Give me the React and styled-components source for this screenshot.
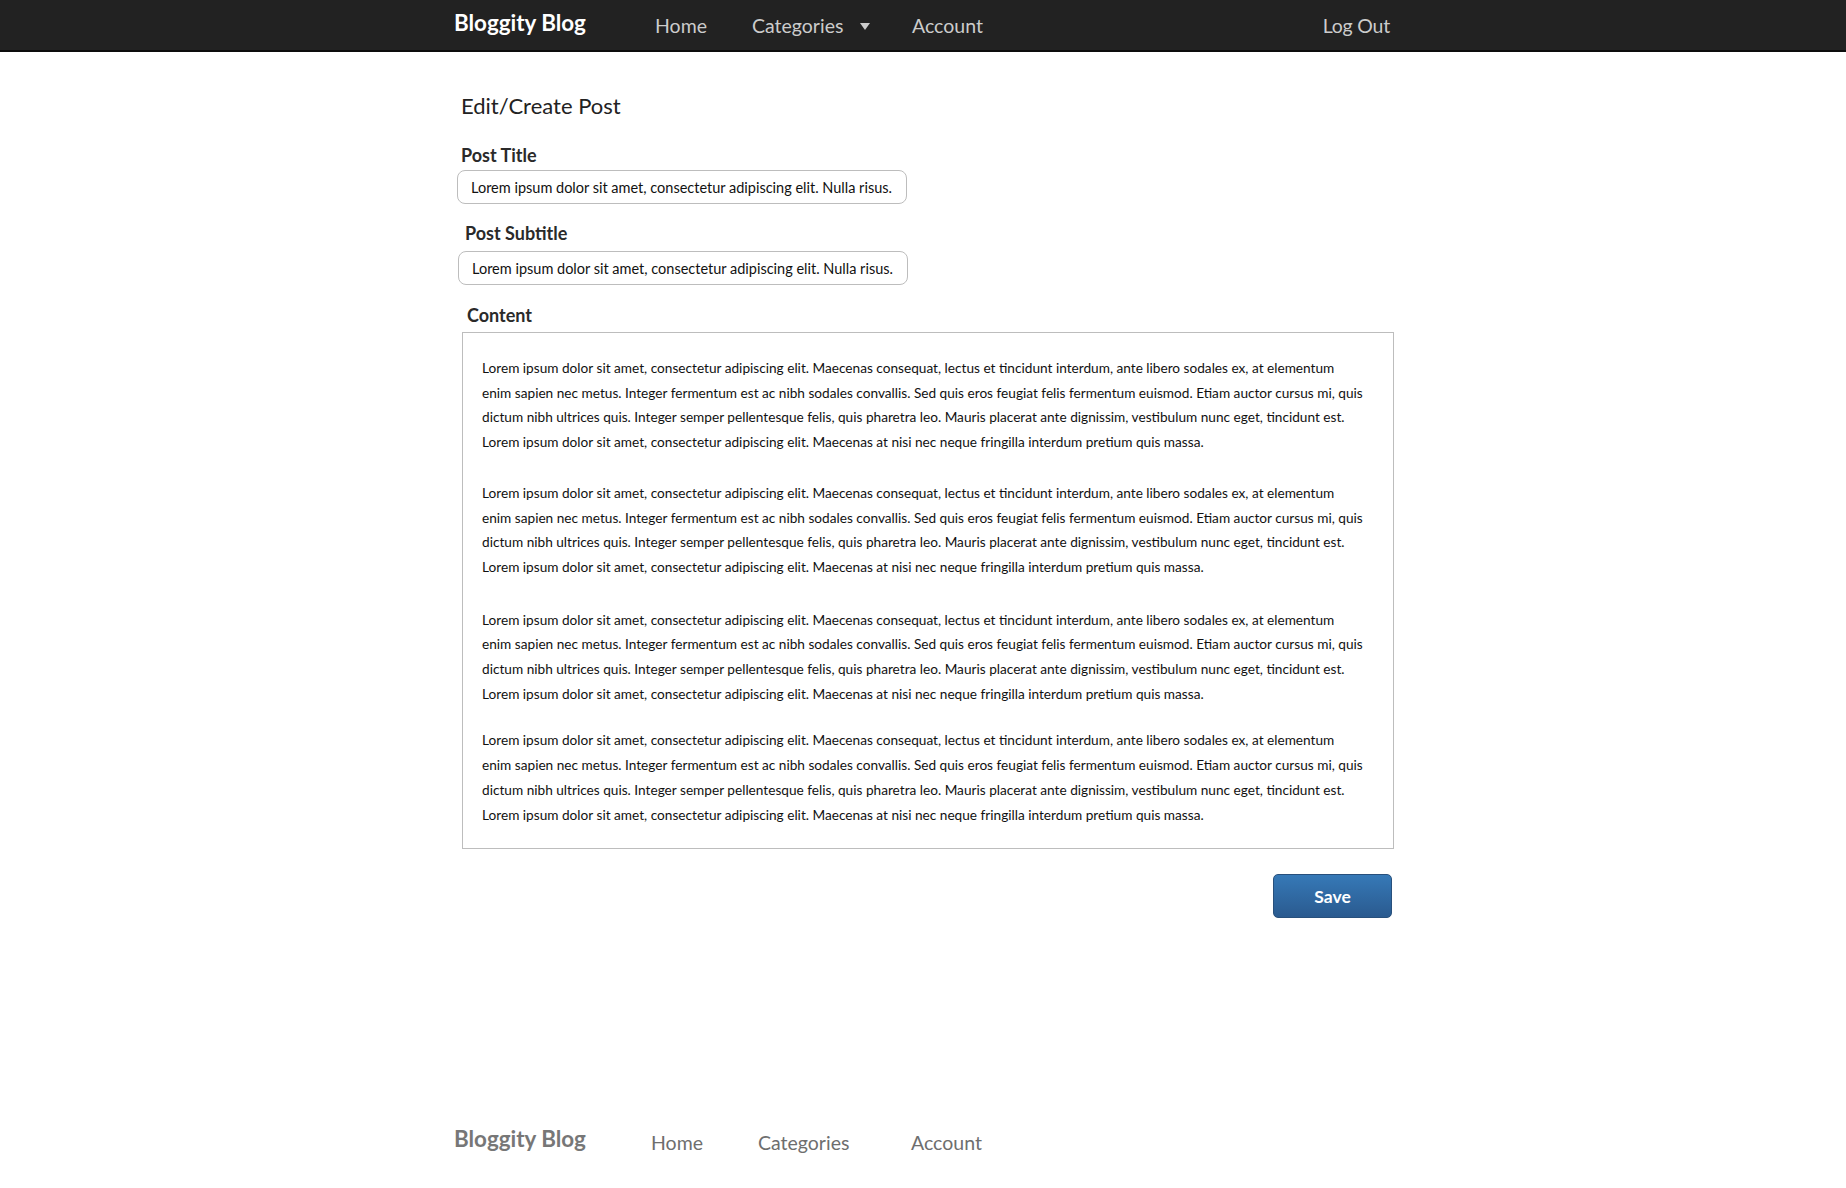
import React from "react";
import styled, { createGlobalStyle } from "styled-components";

const Global = createGlobalStyle`
  html, body { margin: 0; padding: 0; background: #fff; }
  body { font-family: Lato, "Open Sans", Arial, sans-serif; color: #222; }
  * { box-sizing: border-box; }
`;

const TopBar = styled.header`
  height: 52px;
  background: #222;
  border-bottom: 2px solid #0d0d0d;
`;

const Container = styled.div`
  width: 940px;
  margin: 0 auto;
`;

const NavRow = styled(Container)`
  display: flex;
  align-items: center;
  height: ${(p) => p.h}px;
`;

const Brand = styled.div`
  width: ${(p) => p.w}px;
  padding-left: 1px;
  font-size: 22.4px;
  font-weight: 700;
  color: ${(p) => p.color};
  padding-bottom: ${(p) => p.lift}px;
`;

const NavLink = styled.a`
  display: flex;
  align-items: center;
  width: ${(p) => (p.w ? `${p.w}px` : "auto")};
  font-size: 19.5px;
  color: ${(p) => p.color};
  text-decoration: none;
`;

const Caret = styled.span`
  display: inline-block;
  margin-left: 17px;
  margin-top: 2px;
  width: 0;
  height: 0;
  border-left: 5.5px solid transparent;
  border-right: 5.5px solid transparent;
  border-top: 7px solid #ccc;
`;

const Spacer = styled.div`
  flex: 1;
`;

const LogOut = styled(NavLink)`
  margin-right: 3px;
  letter-spacing: -0.2px;
`;

const Main = styled(Container)`
  display: flex;
  flex-direction: column;
  padding-top: 40px;
`;

const Heading = styled.h1`
  margin: 0 0 0 8px;
  font-size: 22px;
  line-height: 28px;
  font-weight: 400;
  color: #222;
`;

const Label = styled.label`
  display: block;
  margin: ${(p) => p.top}px 0 0 ${(p) => p.indent}px;
  font-size: 18px;
  line-height: 22px;
  font-weight: 700;
  color: #2a2a2a;
`;

const TextInput = styled.input`
  display: block;
  width: 450px;
  height: 34px;
  margin: ${(p) => p.top}px 0 0 ${(p) => p.indent}px;
  padding: 0 0 0 13px;
  border: 1px solid #bdbdbd;
  border-radius: 8px;
  font-family: Lato, "Open Sans", Arial, sans-serif;
  font-size: 14.5px;
  color: #111;
  outline: none;
  background: #fff;
`;

const ContentBox = styled.div`
  margin: 6px 0 0 9px;
  width: 932px;
  padding: 23px 10px 21px 19px;
  border: 1px solid #bdbdbd;
  background: #fff;
`;

const Para = styled.p`
  margin: 0 0 ${(p) => p.gap}px 0;
  font-size: 13.65px;
  line-height: 24.7px;
  color: #111;
  white-space: nowrap;
`;

const Line = styled.span`
  display: block;
`;

const ButtonRow = styled.div`
  display: flex;
  justify-content: flex-end;
  margin-top: 25px;
  padding-right: 1px;
`;

const SaveButton = styled.button`
  width: 119px;
  height: 44px;
  border: 1px solid #28507c;
  border-radius: 5px;
  background: linear-gradient(#3679b7, #2a5a8f);
  color: #fff;
  font-family: Lato, "Open Sans", Arial, sans-serif;
  font-size: 17.5px;
  font-weight: 700;
  cursor: pointer;
`;

const Footer = styled.footer`
  padding-top: 202px;
`;

const lines = [
  "Lorem ipsum dolor sit amet, consectetur adipiscing elit. Maecenas consequat, lectus et tincidunt interdum, ante libero sodales ex, at elementum",
  "enim sapien nec metus. Integer fermentum est ac nibh sodales convallis. Sed quis eros feugiat felis fermentum euismod. Etiam auctor cursus mi, quis",
  "dictum nibh ultrices quis. Integer semper pellentesque felis, quis pharetra leo. Mauris placerat ante dignissim, vestibulum nunc eget, tincidunt est.",
  "Lorem ipsum dolor sit amet, consectetur adipiscing elit. Maecenas at nisi nec neque fringilla interdum pretium quis massa.",
];

const gaps = [26, 28, 22, 0];
const sample = "Lorem ipsum dolor sit amet, consectetur adipiscing elit. Nulla risus.";

export default function App() {
  return (
    <>
      <Global />
      <TopBar>
        <NavRow h={50}>
          <Brand w={202} color="#fff" lift={6}>Bloggity Blog</Brand>
          <NavLink w={97} color="#ccc" href="#">Home</NavLink>
          <NavLink w={160} color="#ccc" href="#">
            Categories
            <Caret />
          </NavLink>
          <NavLink color="#ccc" href="#">Account</NavLink>
          <Spacer />
          <LogOut color="#ccc" href="#">Log Out</LogOut>
        </NavRow>
      </TopBar>

      <Main>
        <Heading>Edit/Create Post</Heading>
        <Label top={24} indent={8}>Post Title</Label>
        <TextInput top={4} indent={4} readOnly value={sample} />
        <Label top={18} indent={12}>Post Subtitle</Label>
        <TextInput top={7} indent={5} readOnly value={sample} />
        <Label top={19} indent={14}>Content</Label>
        <ContentBox>
          {gaps.map((g, i) => (
            <Para key={i} gap={g}>
              {lines.map((l, j) => (
                <Line key={j}>{l}</Line>
              ))}
            </Para>
          ))}
        </ContentBox>
        <ButtonRow>
          <SaveButton>Save</SaveButton>
        </ButtonRow>
      </Main>

      <Footer>
        <NavRow h={44}>
          <Brand w={198} color="#777" lift={7}>Bloggity Blog</Brand>
          <NavLink w={107} color="#6e6e6e" href="#">Home</NavLink>
          <NavLink w={153} color="#6e6e6e" href="#">Categories</NavLink>
          <NavLink color="#6e6e6e" href="#">Account</NavLink>
        </NavRow>
      </Footer>
    </>
  );
}
